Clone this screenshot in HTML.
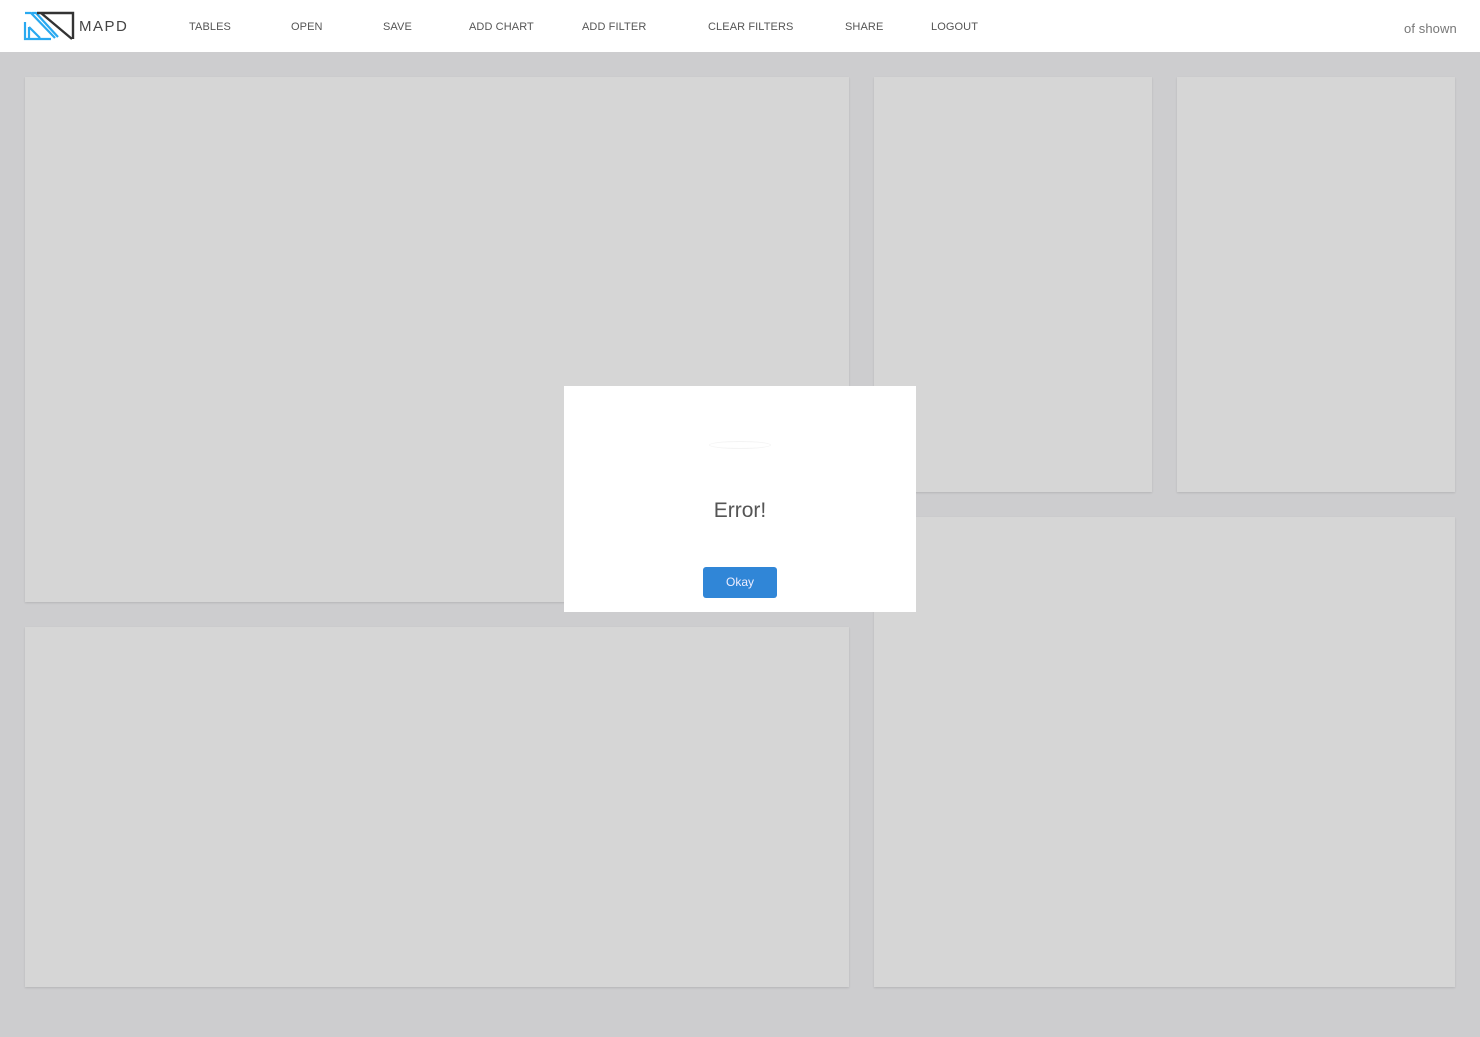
<!DOCTYPE html>
<html><head><style>
*{margin:0;padding:0;box-sizing:border-box}
body{width:1480px;height:1037px;background:#cdcdcf;font-family:"Liberation Sans",sans-serif;position:relative;overflow:hidden}
.nav{position:absolute;left:0;top:0;width:1480px;height:52px;background:#fff}
.nav span{position:absolute;top:21px;font-size:11px;color:#555;letter-spacing:0.1px}
.p{position:absolute;background:#d6d6d6;box-shadow:0 1px 2px rgba(0,0,0,.12)}
.modal{position:absolute;left:564px;top:386px;width:352px;height:226px;background:#fff}
</style></head><body>
<div class="nav">
<svg style="position:absolute;left:20px;top:8px" width="60" height="36" viewBox="0 0 60 36">
<path d="M5 14v17h26" fill="none" stroke="#29a9f0" stroke-width="2.2"/>
<path d="M5 5h6l24 25M12 5h4l22 24M9 19v11M9 19l11 11" fill="none" stroke="#29a9f0" stroke-width="2.2"/>
<path d="M17 5h36v26M21 5l31 26" fill="none" stroke="#333" stroke-width="2.4"/>
</svg>
<span style="left:79px;top:18px;font-size:15px;letter-spacing:1.5px;color:#444">MAPD</span>
<span style="left:189px">TABLES</span>
<span style="left:291px">OPEN</span>
<span style="left:383px">SAVE</span>
<span style="left:469px">ADD CHART</span>
<span style="left:582px">ADD FILTER</span>
<span style="left:708px">CLEAR FILTERS</span>
<span style="left:845px">SHARE</span>
<span style="left:931px">LOGOUT</span>
<span style="left:1404px;font-size:13px;color:#777">of shown</span>
</div>
<div class="p" style="left:25px;top:77px;width:824px;height:525px"></div>
<div class="p" style="left:874px;top:77px;width:278px;height:415px"></div>
<div class="p" style="left:1177px;top:77px;width:278px;height:415px"></div>
<div class="p" style="left:874px;top:517px;width:581px;height:470px"></div>
<div class="p" style="left:25px;top:627px;width:824px;height:360px"></div>
<div class="modal">
<div style="position:absolute;left:145px;top:55px;width:62px;height:8px;border:1px solid #f4f4f4;border-radius:50%"></div>
<div style="position:absolute;left:0;width:352px;top:113px;text-align:center;font-size:21px;color:#555">Error!</div>
<div style="position:absolute;left:139px;top:181px;width:74px;height:31px;background:#3086d7;border-radius:3px;color:#eef;font-size:12px;text-align:center;line-height:31px">Okay</div>
</div>
</body></html>
